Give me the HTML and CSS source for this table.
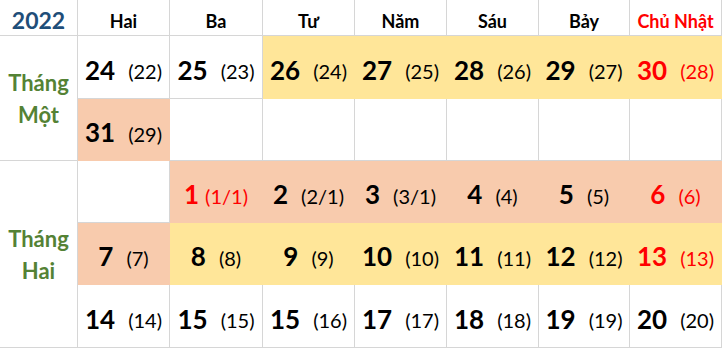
FILE: index.html
```html
<!DOCTYPE html>
<html lang="vi">
<head>
<meta charset="utf-8">
<title>Lịch 2022</title>
<link rel="stylesheet" href="styles.css">
</head>
<body>
<div class="cal">
  <div class="h year">2022</div>
  <div class="h">Hai</div>
  <div class="h">Ba</div>
  <div class="h">Tư</div>
  <div class="h">Năm</div>
  <div class="h">Sáu</div>
  <div class="h">Bảy</div>
  <div class="h sun">Chủ Nhật</div>

  <div class="m m1">Tháng<br>Một</div>
  <div class="c"><b>24</b><span>(22)</span></div>
  <div class="c"><b>25</b><span>(23)</span></div>
  <div class="c y"><b>26</b><span>(24)</span></div>
  <div class="c y"><b>27</b><span>(25)</span></div>
  <div class="c y"><b>28</b><span>(26)</span></div>
  <div class="c y"><b>29</b><span>(27)</span></div>
  <div class="c y red"><b>30</b><span>(28)</span></div>

  <div class="c o"><b>31</b><span>(29)</span></div>
  <div class="c"></div>
  <div class="c"></div>
  <div class="c"></div>
  <div class="c"></div>
  <div class="c"></div>
  <div class="c"></div>

  <div class="m m2">Tháng<br>Hai</div>
  <div class="c"></div>
  <div class="c o red tight"><b>1</b><span>(1/1)</span></div>
  <div class="c o"><b>2</b><span>(2/1)</span></div>
  <div class="c o"><b>3</b><span>(3/1)</span></div>
  <div class="c o"><b>4</b><span>(4)</span></div>
  <div class="c o"><b>5</b><span>(5)</span></div>
  <div class="c o red"><b>6</b><span>(6)</span></div>

  <div class="c o"><b>7</b><span>(7)</span></div>
  <div class="c y"><b>8</b><span>(8)</span></div>
  <div class="c y"><b>9</b><span>(9)</span></div>
  <div class="c y"><b>10</b><span>(10)</span></div>
  <div class="c y"><b>11</b><span>(11)</span></div>
  <div class="c y"><b>12</b><span>(12)</span></div>
  <div class="c y red"><b>13</b><span>(13)</span></div>

  <div class="c"><b>14</b><span>(14)</span></div>
  <div class="c"><b>15</b><span>(15)</span></div>
  <div class="c"><b>15</b><span>(16)</span></div>
  <div class="c"><b>17</b><span>(17)</span></div>
  <div class="c"><b>18</b><span>(18)</span></div>
  <div class="c"><b>19</b><span>(19)</span></div>
  <div class="c"><b>20</b><span>(20)</span></div>
</div>
</body>
</html>
```
FILE: styles.css
```css
html, body {
  margin: 0;
  padding: 0;
  background: #ffffff;
}

body {
  font-family: Lato, "Noto Sans", "DejaVu Sans", sans-serif;
  color: #000;
  overflow: hidden;
}

.cal {
  display: grid;
  grid-template-columns: 78px 92px 93px 92px 92px 92px 91px 92px;
  grid-template-rows: 36px 63px 62px 62px 62px 63px;
  width: 722px;
}

.cal > div {
  box-sizing: border-box;
  border-right: 1px solid #d6d6d6;
  border-bottom: 1px solid #d6d6d6;
}

.h {
  display: flex;
  align-items: center;
  justify-content: center;
  padding-top: 6px;
  font-weight: 700;
  font-size: 18px;
}

.h.year {
  font-size: 23px;
  color: #1f4e79;
  padding-top: 4px;
}

.h.sun {
  color: #ff0000;
}

.m {
  grid-column: 1;
  display: flex;
  align-items: center;
  justify-content: center;
  text-align: center;
  font-weight: 700;
  font-size: 22px;
  line-height: 32px;
  color: #548235;
  padding-top: 2px;
}

.m1 {
  grid-row: 2 / span 2;
}

.m2 {
  grid-row: 4 / span 3;
}

.c {
  display: flex;
  align-items: center;
  justify-content: center;
  gap: 13px;
  padding-top: 5px;
}

.c b {
  font-weight: 700;
  font-size: 26px;
}

.c span {
  font-size: 20px;
  padding-top: 3px;
}

.c.tight {
  gap: 6px;
}

.c.y {
  background: #ffe699;
  border-color: #ffe699;
}

.c.o {
  background: #f8cbad;
  border-color: #f8cbad;
}

.c.red {
  color: #ff0000;
}
```
